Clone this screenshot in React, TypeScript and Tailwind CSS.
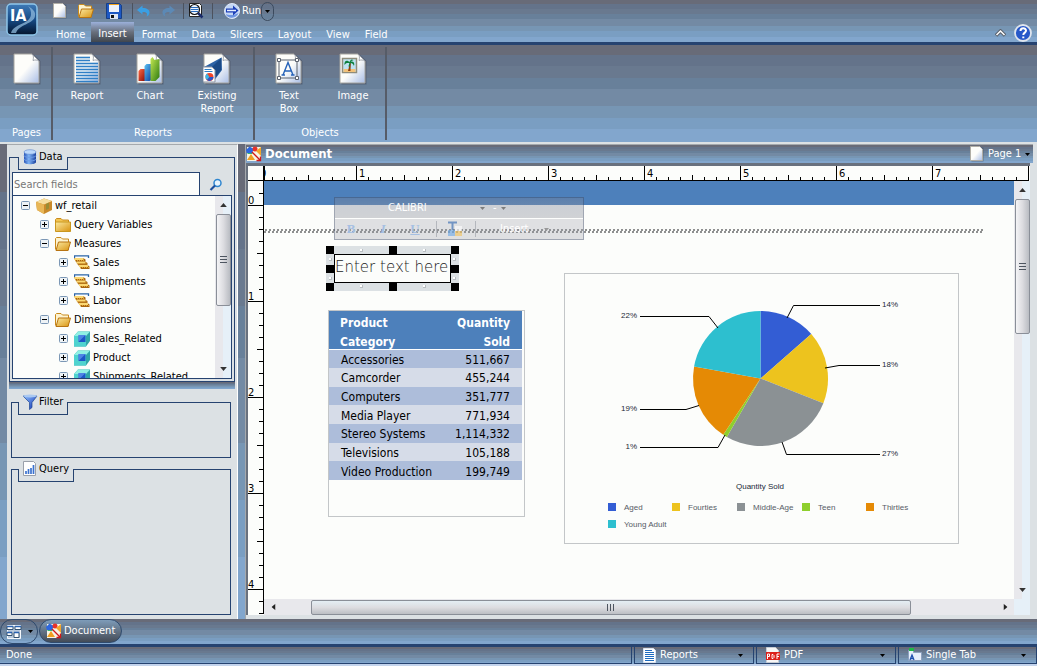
import React from "react";

const bands =
  "bg-[linear-gradient(to_bottom,#686b78_0_10%,#64738a_10%_22%,#69798f_22%_34%,#68809a_34%_45%,#738aa4_45%_63%,#7796b4_63%_75%,#7a9ec2_75%_87%,#82a6cd_87%_100%)]";

type IconProps = { className?: string };

function SharedDefs() {
  return (
    <svg width="0" height="0" className="absolute" aria-hidden="true">
      <defs>
        <linearGradient id="paper" x1="0" y1="0" x2="1" y2="1">
          <stop offset="0.5" stopColor="#fdfdfa" />
          <stop offset="1" stopColor="#a8bde6" />
        </linearGradient>
        <linearGradient id="folder" x1="0" y1="0" x2="1" y2="1">
          <stop offset="0" stopColor="#fbe9a0" />
          <stop offset="1" stopColor="#d99411" />
        </linearGradient>
        <linearGradient id="app" x1="0" y1="0" x2="0" y2="1">
          <stop offset="0" stopColor="#3f7bb8" />
          <stop offset="0.5" stopColor="#174b86" />
          <stop offset="1" stopColor="#03132b" />
        </linearGradient>
        <linearGradient id="blueball" x1="0" y1="0" x2="1" y2="1">
          <stop offset="0" stopColor="#8fc0ff" />
          <stop offset="1" stopColor="#0c2fb0" />
        </linearGradient>
        <linearGradient id="cyl" x1="0" y1="0" x2="1" y2="0">
          <stop offset="0" stopColor="#2a55b8" />
          <stop offset="0.4" stopColor="#7fb4f5" />
          <stop offset="1" stopColor="#1a3f9d" />
        </linearGradient>
        <linearGradient id="barGreen" x1="0" y1="0" x2="1" y2="1">
          <stop offset="0" stopColor="#c6ea52" />
          <stop offset="1" stopColor="#2c7a10" />
        </linearGradient>
        <linearGradient id="barBlue" x1="0" y1="0" x2="1" y2="1">
          <stop offset="0" stopColor="#5cc4f5" />
          <stop offset="1" stopColor="#0c3fa0" />
        </linearGradient>
        <linearGradient id="barRed" x1="0" y1="0" x2="1" y2="1">
          <stop offset="0" stopColor="#ff6a45" />
          <stop offset="1" stopColor="#8a0c05" />
        </linearGradient>
      </defs>
    </svg>
  );
}

function Sheet({ children }: { children?: React.ReactNode }) {
  return (
    <svg width="28" height="32" viewBox="0 0 28 32" className="shrink-0">
      <path d="M2.500 2h18.500L27.500 8v23.500h-25z" fill="#4d5669" opacity="0.7" />
      <path d="M1 1h18l7 7v22H1z" fill="url(#paper)" stroke="#a5a49e" />
      <path d="M19 1c2 2 1.500 4 1 6.500 2-.8 4-.8 6 .5z" fill="#ffffff" stroke="#8a8f99" strokeWidth="0.8" />
      {children}
    </svg>
  );
}

const ReportSheet = () => (
  <Sheet>
    {[4, 7, 10, 13, 16, 19, 22, 25, 28].map((y) => (
      <path key={y} d={`M3 ${y + 0.5}H${y < 9 ? 17 : 25}`} stroke="#2f7fc6" strokeWidth="1.6" />
    ))}
  </Sheet>
);

const ChartSheet = () => (
  <Sheet>
    <path d="M2.500 18l2-2h5v12h-7z" fill="url(#barRed)" />
    <path d="M8.500 13l2-2h5v16l-2 1h-5z" fill="url(#barBlue)" />
    <path d="M14.500 6l2-2 2 3 5-1v18l-4 4h-5z" fill="url(#barGreen)" />
  </Sheet>
);

const ExistingSheet = () => (
  <Sheet>
    <path d="M18.500 4.500L1 14l6 2 3 3 1.500 8L19 17z" fill="#2d62a5" />
    <path d="M18.500 4.500L8 15l4 10 6-8z" fill="#1b4a86" />
    <path d="M0 14h9l3 3v12H0z" fill="#fff" stroke="#8a93a3" />
    <path d="M1.500 16.500h7M1.500 18.500h8" stroke="#2f7fc6" />
    <circle cx="6.500" cy="24" r="4" fill="#f0432a" />
    <path d="M6.500 24L4 20.500A4 4 0 0 0 4 27z" fill="#38b6e8" />
    <path d="M6.500 24L4 27a4 4 0 0 0 6.500-3z" fill="#2a56c8" />
  </Sheet>
);

const TextBoxSheet = () => (
  <Sheet>
    <rect x="4" y="7" width="18" height="18" fill="none" stroke="#5b626e" />
    <path d="M2.500 5.500h3v3h-3zM20.500 5.500h3v3h-3zM2.500 23.500h3v3h-3zM20.500 23.500h3v3h-3z" fill="#fff" stroke="#5b626e" />
    <path d="M8 22l5-12.500L18 22M9.800 18h6.500M6.500 22h3.500M16 22h3.500" fill="none" stroke="#2763b8" strokeWidth="1.4" />
  </Sheet>
);

const ImageSheet = () => (
  <Sheet>
    <rect x="3.500" y="5.500" width="14" height="14" fill="#bfe2f2" stroke="#8f8d7c" strokeWidth="1.500" />
    <path d="M4.500 16h12v3h-12z" fill="#f2c27a" />
    <path d="M11 9c-1 3-1 6-2 9h2.500c0-3 .5-6 .3-9z" fill="#8a3f10" />
    <path d="M10.500 9C7 6 5 9 5.500 12 7 9.500 9 10 10.500 10 10 12 9 13 10 14c1-1 1.500-3 1.300-4 2 0 3 1 3.700 3 1-3-.5-5-3.500-4.300 1-1 2.500-1.500 3-1.200-1.500-1.800-3-1-4 1.500z" fill="#0c7f3c" />
  </Sheet>
);

function MiniPage({ className }: IconProps) {
  return (
    <svg width="16" height="16" viewBox="0 0 16 16" className={className}>
      <path d="M2.500 1.500h12v14h-12z" fill="#4d5669" opacity="0.6" />
      <path d="M1.500.5h9l3 3v11h-12z" fill="url(#paper)" stroke="#b0aea6" />
      <path d="M10.500.5v3h3z" fill="#fff" />
    </svg>
  );
}

function Folder({ open, className }: IconProps & { open?: boolean }) {
  return (
    <svg width="16" height="16" viewBox="0 0 16 16" className={className}>
      <path d="M.5 13V2.500l1-1h4.500l1.500 1.500h6V14H1.500z" fill={open ? "#fdf3cf" : "#f3c552"} stroke="#c98a1c" />
      {open ? (
        <path d="M3.500 6h12l-2.500 8.500H1z" fill="url(#folder)" stroke="#b87412" />
      ) : (
        <path d="M.5 5h15v9.500H.5z" fill="url(#folder)" stroke="#c9971f" />
      )}
    </svg>
  );
}

const SaveIcon = () => (
  <svg width="16" height="16" viewBox="0 0 16 16">
    <path d="M.5.5h13l2 2v13H.5z" fill="#1d58c4" stroke="#173f86" />
    <rect x="3" y="1" width="10" height="8" fill="#eef2fb" />
    <path d="M3 1.500h10" stroke="#f3a21b" />
    <rect x="4" y="11" width="8" height="5" fill="#dfe6f2" />
    <rect x="5" y="12" width="3" height="3" fill="#111" />
  </svg>
);

function Curl({ flip, color }: { flip?: boolean; color: string }) {
  return (
    <svg width="14" height="12" viewBox="0 0 14 12" className={flip ? "-scale-x-100" : ""}>
      <path d="M0 5L5.500.5V3C10 3 13 5 12.500 8c-.2 1.500-1.500 3-3 3.500C11 8.500 9.500 6.800 5.500 7v2.500z" fill={color} />
    </svg>
  );
}

const PreviewIcon = () => (
  <svg width="16" height="16" viewBox="0 0 16 16">
    <path d="M1.500.5h10l2 2v11h-12z" fill="#fff" stroke="#222" />
    <circle cx="6.500" cy="6.500" r="5" fill="#eef6ff" stroke="#111" strokeWidth="1.200" />
    <path d="M3 4.500h7M2.500 6.500h8M3 8.500h7" stroke="#2a6dc0" />
    <path d="M10 10l4.500 4.500" stroke="#1b2c6b" strokeWidth="2.500" />
  </svg>
);

const RunIcon = () => (
  <svg width="16" height="16" viewBox="0 0 16 16">
    <circle cx="8" cy="8" r="7.500" fill="#c3d6f6" stroke="#dfe8f7" />
    <path d="M1.500 11c2 5 11 5 13-1-3 2-9 3-13 1z" fill="#6f95e0" />
    <path d="M2 5.500h7V2.500L14.500 7.500 9 12.500V9.500H2z" fill="#1c3fb8" />
    <path d="M3 7.500h9" stroke="#e6efff" strokeWidth="1.500" />
  </svg>
);

const AppLogo = () => (
  <svg width="32" height="33" viewBox="0 0 32 33">
    <rect x="1" y="1" width="30" height="31" rx="4" fill="url(#app)" stroke="#8fc6ea" strokeWidth="1.500" />
    <path d="M5 30c3-10 18-8 20-18 .5-4-1-7-3-9 5 3 8 6 7 10-1 8-16 8-19 17z" fill="#8fb9dc" opacity="0.75" />
    <text x="4" y="18" fontFamily="DejaVu Sans Condensed, DejaVu Sans, sans-serif" fontWeight="bold" fontSize="16" fill="#fff">
      IA
    </text>
  </svg>
);

const DocIcon = () => (
  <svg width="16" height="16" viewBox="0 0 16 16" className="shrink-0">
    <rect x="1" y="1" width="14" height="14" fill="#f7f4e6" />
    <path d="M0 4l3.500-3.500L8 3 6 7H1z" fill="#2b66e0" />
    <circle cx="9" cy="3" r="2.500" fill="#e8322a" />
    <path d="M1 14l4-6 4 6z" fill="#f0a020" />
    <path d="M15 1v9l-5-5z" fill="#f3a62a" />
    <path d="M1 7h5l1 1H2z" fill="#2fb37a" />
    <path d="M6 6l8 8M14.500 10.500v4h-4" stroke="#d01818" strokeWidth="1.300" fill="none" />
  </svg>
);

const DatabaseIcon = () => (
  <svg width="16" height="16" viewBox="0 0 16 16">
    <path d="M2 3v10c0 3 12 3 12 0V3z" fill="url(#cyl)" />
    <ellipse cx="8" cy="3" rx="6" ry="2.300" fill="#bcd8fb" stroke="#5a84cc" strokeWidth="0.600" />
    <path d="M2 6.500c0 2.500 12 2.500 12 0M2 10c0 2.500 12 2.500 12 0" stroke="#6d9be6" fill="none" />
  </svg>
);

const FilterIcon = () => (
  <svg width="16" height="16" viewBox="0 0 16 16">
    <path d="M1 2h14l-5 6.500v5L7.500 15.500V8.500z" fill="url(#blueball)" stroke="#1d4591" strokeWidth="0.700" />
    <ellipse cx="8" cy="2" rx="7" ry="1.500" fill="#a9c8f1" />
  </svg>
);

const QueryIcon = () => (
  <svg width="16" height="16" viewBox="0 0 16 16">
    <path d="M1.500.5h10l2 2v12h-12z" fill="#fff" stroke="#9aa0aa" />
    <path d="M4 13v-3M6.500 13V8M9 13V7M11.500 13V4" stroke="#3b72cf" strokeWidth="1.700" />
  </svg>
);

const SearchIcon = () => (
  <svg width="14" height="14" viewBox="0 0 14 14">
    <circle cx="8.500" cy="5" r="3.500" fill="#e8f4fd" stroke="#2f86cf" strokeWidth="1.500" />
    <path d="M6 7.500L1.500 12" stroke="#1c4f9e" strokeWidth="2.200" />
  </svg>
);

const PackageIcon = () => (
  <svg width="16" height="16" viewBox="0 0 16 16">
    <path d="M0 4l8-3.500L16 3v9l-8 4-7-4z" fill="#c98a2b" />
    <path d="M0 4l8-3.500L16 3 8 6.500z" fill="#f6dfa0" />
    <path d="M0 4l8 2.500V16l-7-4z" fill="#e8b757" />
    <path d="M10 6l3-1.500v6L10 12z" fill="#7a8f3c" opacity="0.600" />
  </svg>
);

const MeasureIcon = () => (
  <svg width="16" height="16" viewBox="0 0 16 16">
    <path d="M.5 3V.8h14V3" stroke="#2a64a8" fill="none" strokeWidth="1.300" />
    <path d="M0 3h9l2.500 1.500V7H2zM2 6.500h9L13.500 8v2.500h-9zM4.500 10h9l2 1.500V14H7z" fill="#a9650f" />
    <path d="M.5 4h9M2.500 7.500h9M5 11h9" stroke="#fbd873" strokeWidth="2" />
    <path d="M1 5.500h9M3.500 9h9M6 12.500h9" stroke="#e0a53a" strokeDasharray="1 1" />
  </svg>
);

const CubeIcon = () => (
  <svg width="16" height="16" viewBox="0 0 16 16">
    <path d="M0 5l4-4.500h12V10l-4 5.500H0z" fill="#2fa6a8" />
    <path d="M0 5l4-4.500h12L12 5z" fill="#8ff0e4" />
    <path d="M0 5h12v10.500H0z" fill="#4fd3cf" />
    <rect x="4.500" y="4" width="7" height="7" fill="#1d55c7" />
    <path d="M4.500 4h7l-7 7z" fill="#6fa4f7" opacity="0.600" />
  </svg>
);

const HelpIcon = () => (
  <svg width="18" height="18" viewBox="0 0 18 18">
    <circle cx="9" cy="9" r="8" fill="#2758c9" stroke="#dfe5ee" strokeWidth="1.800" />
    <path d="M6.500 7c0-3.500 5.500-3.500 5.500-.3C12 8.500 9.300 8.800 9.300 11M9.300 12.500v1.800" stroke="#fff" strokeWidth="2" fill="none" />
  </svg>
);

const WindowsIcon = () => (
  <svg width="16" height="16" viewBox="0 0 16 16">
    <path d="M1.500 1.500h13v13h-13z" fill="#b9c9dc" stroke="#f4f8fc" />
    <path d="M1 2.500h6v3H1zM9 2.500h6v3H9zM1 8.500h5v3H1zM8 8.500h5v5H8z" fill="#fff" stroke="#32506f" />
    <path d="M1 2.500h6M9 2.500h6M1 8.500h5M8 8.500h5" stroke="#2a62b0" strokeWidth="1.500" />
  </svg>
);

const LinesPage = () => (
  <svg width="14" height="16" viewBox="0 0 14 16">
    <path d="M.5 1.500h10l2 2v12h-12z" fill="#fff" stroke="#dbe3ee" />
    <path d="M2 3.500h7M2 5.500h9M2 7.500h9M2 9.500h9M2 11.500h9M2 13.500h9" stroke="#1f6cc0" />
  </svg>
);

const PdfIcon = () => (
  <svg width="16" height="16" viewBox="0 0 16 16">
    <path d="M1.500.5h9l3 3v12h-12z" fill="#f6f6f6" stroke="#c7ccd4" />
    <rect x="1" y="5" width="14" height="8" fill="#dc1f1a" />
    <path d="M2.500 12V7h2v2.500h-2M7 7.500v4h1l1-1v-2l-1-1zM12 12V7h2.500M12 9.500h2" stroke="#fff" fill="none" />
  </svg>
);

const SingleTabIcon = () => (
  <svg width="16" height="16" viewBox="0 0 16 16">
    <path d="M1.500 3.500h5v2h8v8h-13z" fill="#e6eefb" stroke="#8da1bf" />
    <rect x="2" y="1" width="5" height="3" fill="#1fb845" />
    <path d="M3 13l2-5 2 5M3.500 11.500h3" stroke="#1d4fae" strokeWidth="1.300" fill="none" />
  </svg>
);

function Caret({ className = "text-black" }: IconProps) {
  return (
    <svg width="5" height="3" viewBox="0 0 5 3" className={`shrink-0 ${className}`}>
      <path d="M0 0h5L2.500 3z" fill="currentColor" />
    </svg>
  );
}

const Divider = () => <span className="h-4 w-px bg-[#4c525e]" />;

function RibbonButton({ icon, label, className = "w-16" }: { icon: React.ReactNode; label: string; className?: string }) {
  return (
    <button type="button" className={`flex flex-col items-center gap-1 text-center leading-[13px] ${className}`}>
      {icon}
      <span>{label}</span>
    </button>
  );
}

function RibbonGroup({ title, className = "", children }: { title: string; className?: string; children: React.ReactNode }) {
  return (
    <section aria-label={title} className={`my-0.5 flex flex-col justify-between border-r-2 border-[#565c68] pt-1.5 pb-px ${className}`}>
      <div className="flex items-start">{children}</div>
      <div className="text-center leading-3">{title}</div>
    </section>
  );
}

function Panel({ title, icon, className = "", children }: { title: string; icon: React.ReactNode; className?: string; children?: React.ReactNode }) {
  return (
    <section aria-label={title} className={`flex flex-col border border-[#264370] ${className}`}>
      <div className="-mt-px ml-1.5 flex h-[13px] items-end gap-px self-start border-x border-b border-[#264370] bg-[#dce1e4] pr-1 pl-[3px] pb-1">
        {icon}
        <h2 className="leading-4">{title}</h2>
      </div>
      {children}
    </section>
  );
}

type Node = { label: string; level: number; open?: boolean; icon: React.ReactNode };

const nodes: Node[] = [
  { label: "wf_retail", level: 0, open: true, icon: <PackageIcon /> },
  { label: "Query Variables", level: 1, icon: <Folder /> },
  { label: "Measures", level: 1, open: true, icon: <Folder open /> },
  { label: "Sales", level: 2, icon: <MeasureIcon /> },
  { label: "Shipments", level: 2, icon: <MeasureIcon /> },
  { label: "Labor", level: 2, icon: <MeasureIcon /> },
  { label: "Dimensions", level: 1, open: true, icon: <Folder open /> },
  { label: "Sales_Related", level: 2, icon: <CubeIcon /> },
  { label: "Product", level: 2, icon: <CubeIcon /> },
  { label: "Shipments_Related", level: 2, icon: <CubeIcon /> },
];

const indents = ["pl-2", "pl-[27px]", "pl-[46px]"];

function Expander({ open }: { open?: boolean }) {
  return (
    <svg width="9" height="9" viewBox="0 0 9 9">
      <rect x="0.5" y="0.5" width="8" height="8" rx="1" fill="#eef3f6" stroke="#7b97b5" />
      <path d={open ? "M2 4.500h5" : "M2 4.500h5M4.500 2v5"} stroke="#000" />
    </svg>
  );
}

function VScroll({ thumb }: { thumb: string }) {
  return (
    <div className="flex w-4 shrink-0 flex-col items-center bg-[linear-gradient(to_right,#e8e8ec_50%,#e6f0f8_50%)]">
      <button type="button" aria-label="Scroll up" className="flex h-[18px] w-4 items-center justify-center">
        <Caret className="h-1 w-[7px] rotate-180 text-[#333]" />
      </button>
      <div className={`flex w-[15px] items-center justify-center rounded-xs border border-[#8a8f98] bg-[linear-gradient(to_right,#f4f4f6,#dcdce0_50%,#b9bcc2)] ${thumb}`}>
        <svg width="7" height="8" viewBox="0 0 7 8">
          <path d="M0 .5h7M0 3.500h7M0 6.500h7" stroke="#4d5560" />
        </svg>
      </div>
      <button type="button" aria-label="Scroll down" className="mt-auto flex h-[18px] w-4 items-center justify-center">
        <Caret className="h-1 w-[7px] text-[#333]" />
      </button>
    </div>
  );
}

function DataPanel() {
  return (
    <Panel title="Data" icon={<DatabaseIcon />} className="mx-0.5 mt-3 px-0.5 pb-0.5">
      <div className="flex">
        <input
          type="text"
          aria-label="Search fields"
          placeholder="Search fields"
          className="mt-0.5 h-6 w-[188px] border border-[#264370] bg-[#fcfdfb] px-px placeholder:text-[#777] focus:outline-none"
        />
        <button type="button" aria-label="Search" className="flex flex-1 items-center justify-center pt-1">
          <SearchIcon />
        </button>
      </div>
      <div className="-mt-px flex h-[184px] overflow-hidden border border-[#264370] bg-[#fcfdfb]">
        <ul className="flex-1">
          {nodes.map((n) => (
            <li key={n.label} className={`flex h-[19px] items-center ${indents[n.level]}`}>
              <button type="button" aria-label={n.open ? `Collapse ${n.label}` : `Expand ${n.label}`}>
                <Expander open={n.open} />
              </button>
              <span className="mr-[3px] ml-1.5">{n.icon}</span>
              <span className="whitespace-nowrap">{n.label}</span>
            </li>
          ))}
        </ul>
        <VScroll thumb="h-[92px]" />
      </div>
    </Panel>
  );
}

const inches = [0, 1, 2, 3, 4, 5, 6, 7];
const hMinor = Array.from({ length: 64 }, (_, i) => i + 1).filter((i) => i % 8 !== 0);
const vMinor = Array.from({ length: 36 }, (_, i) => i - 1).filter((i) => i % 8 !== 0);

function RulerTop() {
  return (
    <svg width="100%" height="15" className="block">
      <path d="M.5 0v15" stroke="#000" />
      {inches.map((n) => (
        <g key={n}>
          {n > 0 && <path d={`M${n * 96 - 3.5} 0v15`} stroke="#000" />}
          <text x={n * 96 - (n ? 1 : 4)} y="11" fontSize="11">
            {n}
          </text>
        </g>
      ))}
      <path d="M764.500 0v15" stroke="#000" />
      {hMinor.map((i) => (
        <path key={i} d={`M${i * 12 - 3.5} 14v-${i % 4 ? 3 : 5}`} stroke="#000" />
      ))}
      <path d="M0 14.500h765" stroke="#000" />
    </svg>
  );
}

function RulerLeft() {
  return (
    <svg width="16" height="433" className="block">
      {vMinor.map((i) => (
        <path key={i} d={`M15 ${24.5 + i * 12}h-${i % 4 ? 4 : 6}`} stroke="#000" />
      ))}
      {inches.slice(0, 5).map((n) => (
        <g key={n}>
          <path d={`M0 ${24.5 + n * 96}h15`} stroke="#000" />
          <text x="0" y={23 + n * 96} fontSize="11">
            {n}
          </text>
        </g>
      ))}
      <path d="M15.500 0v433" stroke="#000" />
    </svg>
  );
}

function FloatingToolbar() {
  return (
    <div className="absolute top-4 left-[70px] flex h-[43px] w-[250px] flex-col border border-[#44506a]/50 text-white">
      <div className="flex h-[21px] items-center border-b border-white/80 bg-[linear-gradient(to_bottom,#8b93a8,#b4b7be)]/60 opacity-95">
        <div className="flex h-full w-full items-center bg-[linear-gradient(to_bottom,rgb(120_130_150/0.4),rgb(160_163_172/0.5))]">
          <select aria-label="Font" className="ml-[53px] w-[92px] appearance-none bg-transparent leading-4 focus:outline-none">
            <option>CALIBRI</option>
          </select>
          <Caret className="text-[#777]" />
          <select aria-label="Font size" className="ml-2 w-2 appearance-none bg-transparent leading-4 focus:outline-none">
            <option>-</option>
          </select>
          <Caret className="text-[#777]" />
        </div>
      </div>
      <div className="flex flex-1 items-center bg-[#9a9eaa]/30 text-[13px] leading-4 text-[#a5bfe2]">
        <button type="button" className="ml-2.5 w-3 font-['Liberation_Serif',serif] font-bold">B</button>
        <button type="button" className="ml-5 w-3 font-['Liberation_Serif',serif] font-bold italic">I</button>
        <button type="button" className="ml-5 w-3 font-['Liberation_Serif',serif] font-bold underline">U</button>
        <span className="mr-2.5 ml-[15px] h-4 w-px bg-[#b4b7bd]" />
        <button type="button" aria-label="Text styling" className="opacity-60">
          <svg width="16" height="16" viewBox="0 0 16 16">
            <path d="M1 1.500h9M5.500 1.500V9" stroke="#2a62b0" strokeWidth="2" />
            <rect x="1" y="9" width="7" height="6" fill="#6aa9ea" />
            <rect x="8" y="5" width="7" height="5" fill="#fff" />
            <rect x="8" y="10" width="7" height="5" fill="#f3c35a" />
          </svg>
        </button>
        <span className="mr-6 ml-3 h-4 w-px bg-[#b4b7bd]" />
        <button type="button" className="flex items-center gap-4 text-[11px] text-white">
          Insert
          <Caret className="text-[#999]" />
        </button>
      </div>
    </div>
  );
}

const handleRows = ["top-0", "top-[19px]", "bottom-0"];
const handleCols = ["left-0", "left-[63px]", "right-0"];
const gripSpots = [
  "left-[34px] top-[3px]",
  "left-[97px] top-[3px]",
  "left-[34px] bottom-[3px]",
  "left-[97px] bottom-[3px]",
  "left-[3px] top-3",
  "left-[3px] top-[31px]",
  "right-[3px] top-3",
  "right-[3px] top-[31px]",
];

function TextBox() {
  return (
    <div className="absolute top-[65px] left-[62px] h-[45px] w-[133px] bg-[#dce1e4] p-2">
      <div className="h-full border border-black bg-[#fcfdfb]">
        <input
          aria-label="Text box"
          defaultValue="Enter text here"
          className="block h-6 w-full bg-transparent font-['DejaVu_Sans','Noto_Sans',sans-serif] text-[15px] font-extralight text-[#222] focus:outline-none"
        />
      </div>
      {handleRows.map((r, i) =>
        handleCols.map((c, j) => (i === 1 && j === 1 ? null : <span key={r + c} className={`absolute size-2 bg-black ${r} ${c}`} />))
      )}
      {gripSpots.map((p) => (
        <span key={p} className={`absolute size-[3px] border-r border-b border-[#b9bec2] bg-white ${p}`} />
      ))}
    </div>
  );
}

const sales = [
  ["Accessories", "511,667"],
  ["Camcorder", "455,244"],
  ["Computers", "351,777"],
  ["Media Player", "771,934"],
  ["Stereo Systems", "1,114,332"],
  ["Televisions", "105,188"],
  ["Video Production", "199,749"],
];

function SalesTable() {
  return (
    <div className="absolute top-[129px] left-16 h-[207px] w-[197px] border border-[#c3c6c8]">
      <table className="h-[169px] w-[193px] border-collapse text-[12px] leading-4">
        <thead className="bg-[#4d80bb] leading-[19px] text-white">
          <tr className="h-[38px] border-b border-white">
            <th scope="col" className="p-0 pl-[11px] text-left">
              <div className="h-[37px] pt-[3px]">
                Product
                <br />
                Category
              </div>
            </th>
            <th scope="col" className="p-0 pr-3 text-right">
              <div className="h-[37px] pt-[3px]">
                Quantity
                <br />
                Sold
              </div>
            </th>
          </tr>
        </thead>
        <tbody>
          {sales.map(([name, qty]) => (
            <tr key={name} className="odd:bg-[#adbdda] even:bg-[#d6dce8]">
              <td className="p-0 pt-0.5 pl-3">{name}</td>
              <td className="p-0 pt-0.5 pr-3 text-right">{qty}</td>
            </tr>
          ))}
        </tbody>
      </table>
    </div>
  );
}

const slices = [
  { name: "Aged", color: "#335dd4", from: 0, to: 48.8, lx: 43, ly: 231 },
  { name: "Fourties", color: "#edc31e", from: 48.8, to: 111.4, lx: 107, ly: 231 },
  { name: "Middle-Age", color: "#8b9194", from: 111.4, to: 209.9, lx: 172, ly: 231 },
  { name: "Teen", color: "#8ecf2d", from: 209.9, to: 213.5, lx: 237, ly: 231 },
  { name: "Thirties", color: "#e58a05", from: 213.5, to: 280.3, lx: 301, ly: 231 },
  { name: "Young Adult", color: "#2dbfcf", from: 280.3, to: 360, lx: 43, ly: 248 },
];

const callouts = [
  { text: "14%", path: "M222 44L228.500 31.500H315", x: 317, y: 33, anchor: "start" as const },
  { text: "18%", path: "M260 94L274 91.500H315", x: 317, y: 93, anchor: "start" as const },
  { text: "27%", path: "M217 168L221.500 180.500H315", x: 317, y: 182, anchor: "start" as const },
  { text: "1%", path: "M160 161L153 173.500H75", x: 72, y: 175, anchor: "end" as const },
  { text: "19%", path: "M134 131.500L121 135.500H75", x: 72, y: 137, anchor: "end" as const },
  { text: "22%", path: "M153 54L144 42.500H75", x: 72, y: 44, anchor: "end" as const },
];

function arc(from: number, to: number) {
  const point = (deg: number) => {
    const a = (deg * Math.PI) / 180;
    return `${195.5 + 67.5 * Math.sin(a)} ${104.5 - 67.5 * Math.cos(a)}`;
  };
  return `M195.500 104.500L${point(from)}A67.500 67.500 0 0 1 ${point(to)}z`;
}

function PieChart() {
  return (
    <div className="absolute top-[92px] left-[300px] border border-[#c3c6c8]">
      <svg width="393" height="269" viewBox="0 0 393 269" className="block font-['Liberation_Sans',Arial,sans-serif] text-[8px]" role="img" aria-label="Quantity Sold by age group">
        {slices.map((s) => (
          <path key={s.name} d={arc(s.from, s.to)} fill={s.color} />
        ))}
        {callouts.map((c) => (
          <g key={c.text}>
            <path d={c.path} fill="none" stroke="#000" />
            <text x={c.x} y={c.y} textAnchor={c.anchor} fill="#222a38">
              {c.text}
            </text>
          </g>
        ))}
        <text x="195" y="215" textAnchor="middle" fill="#222a38">
          Quantity Sold
        </text>
        {slices.map((s) => (
          <g key={s.name}>
            <rect x={s.lx} y={s.ly - 2} width="8" height="8" fill={s.color} />
            <text x={s.lx + 16} y={s.ly + 5} fill="#565c66">
              {s.name}
            </text>
          </g>
        ))}
      </svg>
    </div>
  );
}

function Canvas() {
  return (
    <div className="relative min-h-0 flex-1 overflow-hidden bg-[#fcfdfb]">
      <div className="h-6 bg-[#4d80bb]" />
      <svg width="720" height="4" className="absolute top-12 left-0">
        <defs>
          <pattern id="hatch" width="4" height="4" patternUnits="userSpaceOnUse">
            <path d="M1 0h2v2H1zM0 2h2v2H0z" fill="#8f9090" />
          </pattern>
        </defs>
        <rect width="720" height="4" fill="url(#hatch)" />
      </svg>
      <FloatingToolbar />
      <TextBox />
      <SalesTable />
      <PieChart />
    </div>
  );
}

function HScroll() {
  return (
    <div className="flex h-4 shrink-0 items-center bg-[#e8e8ec]">
      <button type="button" aria-label="Scroll left" className="flex h-4 w-[18px] items-center justify-center">
        <Caret className="h-1 w-[7px] rotate-90 text-[#222]" />
      </button>
      <div className="ml-[29px] flex h-[15px] w-4/5 items-center justify-center rounded-xs border border-[#8a8f98] bg-[linear-gradient(to_bottom,#e4eef4,#dcdce0_50%,#bcbfc4)]">
        <svg width="8" height="7" viewBox="0 0 8 7">
          <path d="M.5 0v7M3.500 0v7M6.500 0v7" stroke="#4d5560" />
        </svg>
      </div>
      <button type="button" aria-label="Scroll right" className="ml-auto flex h-4 w-[18px] items-center justify-center">
        <Caret className="h-1 w-[7px] -rotate-90 text-[#222]" />
      </button>
    </div>
  );
}

function StatusSelect({ label, value, icon, className }: { label: string; value: string; icon: React.ReactNode; className: string }) {
  return (
    <label className={`ml-0.5 flex items-center gap-[3px] border border-t-0 border-[#264370] px-2 ${className}`}>
      {icon}
      <select aria-label={label} className="flex-1 appearance-none bg-transparent leading-4 text-white focus:outline-none">
        <option>{value}</option>
      </select>
      <Caret className="mr-0.5 text-black" />
    </label>
  );
}

const tabs = ["Home", "Insert", "Format", "Data", "Slicers", "Layout", "View", "Field"];

export default function App() {
  return (
    <div className="flex min-h-screen flex-col bg-[#dce1e4] font-['DejaVu_Sans_Condensed','DejaVu_Sans',sans-serif] text-[11px] leading-4 text-black">
      <SharedDefs />
      <header className={`flex h-[45px] shrink-0 border-b-3 border-[#264370] text-white ${bands}`}>
        <button type="button" aria-label="Application menu" className="mt-[3px] ml-1.5 self-start">
          <AppLogo />
        </button>
        <div className="ml-[11px] flex flex-1 flex-col">
          <div className="flex h-[22px] items-center">
            <button type="button" aria-label="New" className="ml-[3px]"><MiniPage /></button>
            <button type="button" aria-label="Open" className="ml-2.5"><Folder open /></button>
            <button type="button" aria-label="Save" className="mr-2.5 ml-3"><SaveIcon /></button>
            <Divider />
            <button type="button" aria-label="Undo" className="ml-1"><Curl color="#3a9fe4" /></button>
            <button type="button" aria-label="Redo" className="mr-2 ml-2.5"><Curl flip color="#5c89b5" /></button>
            <Divider />
            <button type="button" aria-label="Preview" className="mr-2 ml-1"><PreviewIcon /></button>
            <Divider />
            <button type="button" className="ml-[11px] flex items-center gap-0.5">
              <RunIcon />
              Run
            </button>
            <button type="button" aria-label="Run options" className="flex h-[19px] w-[13px] items-center justify-center rounded-full border border-[#3b4a5e]">
              <Caret />
            </button>
          </div>
          <nav className="flex h-5 gap-px">
            {tabs.map((t) => (
              <a
                key={t}
                href={`#${t.toLowerCase()}`}
                className={t === "Insert" ? "-ml-0.5 bg-[linear-gradient(to_bottom,#9bb0da,#69707c_50%,#40464f)] px-[7px] leading-[23px]" : "px-[7px] leading-[25px]"}
              >
                {t}
              </a>
            ))}
          </nav>
        </div>
        <div className="mr-[5px] flex items-end gap-2">
          <button type="button" aria-label="Collapse ribbon" className="mb-[5px]">
            <svg width="11" height="8" viewBox="0 0 11 8">
              <path d="M1 6.500L5.500 2 10 6.500" stroke="#59606b" strokeWidth="3.500" fill="none" />
              <path d="M1.500 6L5.500 2 9.500 6" stroke="#fff" strokeWidth="1.500" fill="none" />
            </svg>
          </button>
          <button type="button" aria-label="Help"><HelpIcon /></button>
        </div>
      </header>

      <div className={`flex h-[97px] shrink-0 text-white ${bands}`}>
        <RibbonGroup title="Pages" className="w-[53px] pl-0.5">
          <RibbonButton icon={<Sheet />} label="Page" className="w-full" />
        </RibbonGroup>
        <RibbonGroup title="Reports" className="w-[202px]">
          <RibbonButton icon={<ReportSheet />} label="Report" className="ml-0.5 w-16" />
          <RibbonButton icon={<ChartSheet />} label="Chart" className="w-[62px]" />
          <RibbonButton icon={<ExistingSheet />} label="Existing Report" className="w-[72px] px-3" />
        </RibbonGroup>
        <RibbonGroup title="Objects" className="w-[132px]">
          <RibbonButton icon={<TextBoxSheet />} label="Text Box" className="ml-0.5 w-16 px-4" />
          <RibbonButton icon={<ImageSheet />} label="Image" />
        </RibbonGroup>
      </div>

      <div className="flex min-h-[477px] flex-1 border-t-2 border-[#dce1e4] pr-1">
        <div className={`w-[7px] shrink-0 ${bands}`} />
        <aside className="flex w-[231px] shrink-0 flex-col border-r border-white border-t border-t-[#a5a9ad] bg-[#dce1e4]">
          <DataPanel />
          <div className={`mx-0.5 h-[7px] ${bands}`} />
          <Panel title="Filter" icon={<FilterIcon />} className="mr-[6px] ml-1 mt-[13px] h-14" />
          <Panel title="Query" icon={<QueryIcon />} className="mr-[6px] mb-1 ml-1 mt-[11px] flex-1" />
        </aside>
        <div className={`w-[7px] shrink-0 ${bands}`} />
        <main className="flex min-w-0 flex-1 flex-col border-l border-t border-[#a5a9ad] bg-[#dce1e4]">
          <div className={`flex h-[18px] shrink-0 items-center text-white ${bands}`}>
            <DocIcon />
            <h1 className="ml-[3px] text-[13px] font-bold">Document</h1>
            <label className="ml-auto flex items-center gap-[3px]">
              <MiniPage />
              <select aria-label="Page" className="appearance-none bg-transparent leading-4 focus:outline-none">
                <option>Page 1</option>
              </select>
              <Caret className="mr-[3px] text-black" />
            </label>
          </div>
          <div className="mr-[3px] mb-1 flex min-h-0 flex-1 flex-col border-t-3 border-l-2 border-[#69717e]">
            <div className="flex bg-[#fcfdfb]">
              <div className="h-[15px] w-4 shrink-0 border-r border-b border-black" />
              <div className="h-[15px] min-w-0 flex-1"><RulerTop /></div>
            </div>
            <div className="flex min-h-0 flex-1">
              <div className="relative w-4 shrink-0 overflow-hidden bg-[#fcfdfb]">
                <div className="absolute inset-0"><RulerLeft /></div>
              </div>
              <div className="flex min-w-0 flex-1 flex-col">
                <Canvas />
                <HScroll />
              </div>
              <div className="flex flex-col">
                <div className="flex flex-1"><VScroll thumb="h-[135px]" /></div>
                <div className="h-4 bg-[#e6f0f8]" />
              </div>
            </div>
          </div>
        </main>
      </div>

      <div className={`flex h-[25px] shrink-0 text-white ${bands}`}>
        <button type="button" aria-label="Windows" className="flex w-[38px] items-center justify-center gap-1.5 rounded-xl border border-[#2f4a6d]">
          <WindowsIcon />
          <Caret />
        </button>
        <button type="button" className="ml-px flex h-6 items-center gap-0.5 rounded-xl border border-[#2f4a6d] bg-[linear-gradient(to_bottom,#7e9cb9,#5d6b7c_60%,#434b57)] px-1.5">
          <DocIcon />
          Document
        </button>
      </div>
      <footer className="flex h-[22px] shrink-0 flex-col border-t-3 border-b-2 border-t-[#264370] border-b-[#c3d3ec] text-white">
        <div className={`flex flex-1 ${bands}`}>
          <div className="flex flex-1 items-center border-r border-b border-[#264370] pl-1.5">Done</div>
          <StatusSelect label="Output type" value="Reports" icon={<LinesPage />} className="w-[120px]" />
          <StatusSelect label="Format" value="PDF" icon={<PdfIcon />} className="w-[140px]" />
          <StatusSelect label="Window mode" value="Single Tab" icon={<SingleTabIcon />} className="w-[139px]" />
        </div>
      </footer>
    </div>
  );
}
